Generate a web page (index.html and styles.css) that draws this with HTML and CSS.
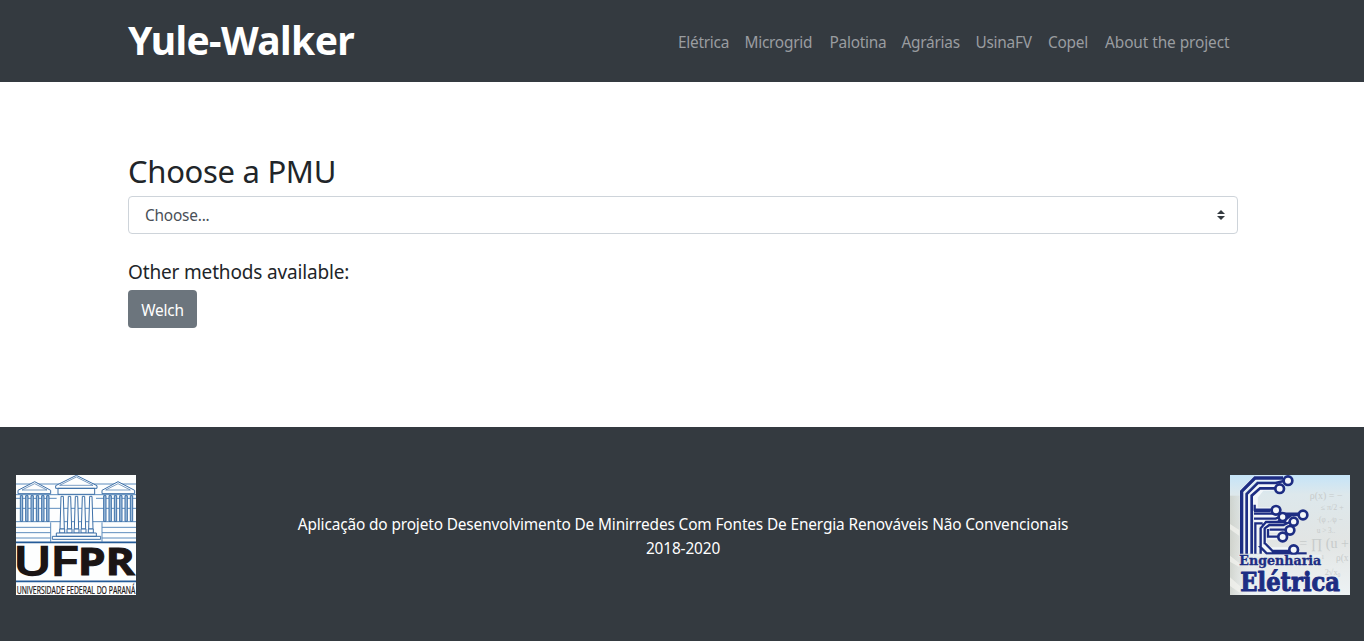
FILE: index.html
```html
<!DOCTYPE html>
<html lang="pt-BR">
<head>
<meta charset="utf-8">
<title>Yule-Walker</title>
<link rel="stylesheet" href="styles.css">
</head>
<body>
<header class="header">
  <h1 class="brand">Yule-Walker</h1>
  <nav class="nav">
    <a>Elétrica</a><a>Microgrid</a><a>Palotina</a><a>Agrárias</a><a>UsinaFV</a><a>Copel</a><a class="about">About the project</a>
  </nav>
</header>
<main class="main">
  <h2 class="title">Choose a PMU</h2>
  <div class="select"><span>Choose...</span>
    <svg class="caret" viewBox="0 0 4 5"><path fill="#343a40" d="M2 0L0 2h4zm0 5L0 3h4z"/></svg>
  </div>
  <h5 class="subtitle">Other methods available:</h5>
  <button class="btn">Welch</button>
</main>
<footer class="footer">
  <svg class="logo" viewBox="18 18 360 360">
    <rect x="18" y="18" width="360" height="360" fill="#fdfefe"/>
    <g fill="none" stroke="#5d8cbd" stroke-width="3">
      <path d="M18 45h135M247 45h131M18 77h360M18 88h122M258 88h120M18 118h360M18 158h104M276 158h102M122 158h154M18 175h104M276 175h102M18 191h104M276 191h102M18 207h104M276 207h102"/>
      <path d="M122 160v58M276 160v58"/>
    </g>
    <g fill="#fdfefe" stroke="#3e70a8" stroke-width="3">
      <path d="M24 64L74 38l48 26v10H24zM276 64l48-26 50 26v10h-98zM137 50l62-31 62 31v8H137zM144 58h110v18H144z"/>
      <path d="M36 63l38-19 37 19zM287 63l37-19 37 19zM149 49l50-25 50 25z" stroke-width="2"/>
      <path fill="#9dbcdb" d="M31 80h7v77h-7zM47 80h7v77h-7zM63 80h7v77h-7zM79 80h7v77h-7zM95 80h7v77h-7zM110 80h7v77h-7zM281 80h7v77h-7zM297 80h7v77h-7zM313 80h7v77h-7zM329 80h7v77h-7zM345 80h7v77h-7zM361 80h7v77h-7z"/>
      <path d="M153 82h7l3 98h-13zM175 82h7l3 98h-13zM196 82h7l3 98h-13zM217 82h7l3 98h-13zM239 82h7l3 98h-13z"/>
      <path d="M149 180h15v12h-15zM171 180h15v12h-15zM192 180h15v12h-15zM213 180h15v12h-15zM235 180h15v12h-15z"/>
      <path d="M139 192h120v10H139zM127 202h145v9H127z"/>
    </g>
    <path d="M18 220h360M18 337h360" stroke="#245b98" stroke-width="5"/>
    <g class="ufpr" fill="#1b1515">
      <text x="12" y="319" textLength="190" lengthAdjust="spacingAndGlyphs" font-size="114" stroke="#1b1515" stroke-width="7">UF</text>
      <text x="203" y="319" textLength="172" lengthAdjust="spacingAndGlyphs" font-size="114" font-weight="700" stroke="#1b1515" stroke-width="3">PR</text>
      <text x="20" y="374" textLength="356" lengthAdjust="spacingAndGlyphs" font-size="30" stroke="#1b1515" stroke-width=".7">UNIVERSIDADE FEDERAL DO PARANÁ</text>
    </g>
  </svg>
  <p class="credits">Aplicação do projeto Desenvolvimento De Minirredes Com Fontes De Energia Renováveis Não Convencionais<br><span>2018-2020</span></p>
  <svg class="logo" viewBox="18 18 360 360">
    <defs>
      <linearGradient id="sky" x1="0" y1="0" x2="0" y2="1"><stop offset="0" stop-color="#c5e4f8"/><stop offset=".16" stop-color="#dde8ec"/><stop offset=".55" stop-color="#e2e5e4"/><stop offset="1" stop-color="#edf2f4"/></linearGradient>
      <linearGradient id="edge"><stop offset="0" stop-color="#c5c8bf" stop-opacity=".65"/><stop offset="1" stop-color="#e7e8e3" stop-opacity="0"/></linearGradient>
    </defs>
    <rect x="18" y="18" width="360" height="360" fill="url(#sky)"/>
    <rect x="18" y="80" width="70" height="298" fill="url(#edge)"/>
    <path d="M18 165l28 18v18l-28-20zM18 260l28 22v12l-28-16zM18 325l30 26v20l-30-20z" fill="#f4f4ef" opacity=".7"/>
    <g class="math" fill="#c7cbcb">
      <text x="257" y="91" font-size="30">ρ(x) = −</text>
      <text x="290" y="124" font-size="24">≤ π/2 +</text>
      <text x="278" y="158" font-size="22">·(φ , ∕φ −</text>
      <text x="278" y="193" font-size="22">u &gt; 3..</text>
      <text x="226" y="238" font-size="42">= ∏ (u +</text>
      <text x="292" y="270" font-size="18">1</text>
      <text x="336" y="276" font-size="28">ρ(x</text>
      <text x="302" y="318" font-size="25">2√x₀</text>
    </g>
    <g fill="none" stroke="#f3f7fa" stroke-width="15" stroke-linejoin="round">
      <path d="M55 252V66L94 28h80M76 252V76l28-29h70M94 122V83l20-25h34M90 123h52M90 135h80M90 149h60l13-3M97 252V163h96M121 252V175l12-12h40l50-24M113 183h73M132 204h28M121 242h72"/>
    </g>
    <g fill="none" stroke="#1d2d83">
      <path stroke-width="10" d="M53 254V67L93 27h84"/>
      <path stroke-width="8" d="M68 254V75L101 42h54l24-6M83 254V80l25-22h46"/>
      <path stroke-width="7" d="M92 107v15h51M90 134h73M90 149h65l12-5M166 134h57M94 254v-91h22M110 254v-76l16-19h61M122 226v-48l14-10h42l20-9M137 182h48M132 180v23h32M122 222l24 24h49M105 230l23 23h120"/>
    </g>
    <path d="M90 121h50v9H90zM184 133h40v9h-20l-25 18h-24l12-10 17-2z" fill="#1d2d83"/>
    <g fill="#f4f7fa" stroke="#1d2d83" stroke-width="8">
      <circle cx="192" cy="35" r="13"/><circle cx="167" cy="59" r="13"/><circle cx="156" cy="124" r="13"/><circle cx="176" cy="144" r="12"/><circle cx="237" cy="138" r="13"/><circle cx="209" cy="158" r="12"/><circle cx="198" cy="184" r="13"/><circle cx="176" cy="204" r="13"/><circle cx="209" cy="242" r="13"/>
    </g>
    <path d="M44 257h248v6H44z" fill="#e9eff3"/>
    <g class="slab" fill="#1d2d83" stroke="#1d2d83" stroke-linejoin="round">
      <text x="46" y="287" textLength="246" lengthAdjust="spacingAndGlyphs" font-size="39" stroke-width="1">Engenharia</text>
      <text x="49" y="366" textLength="299" lengthAdjust="spacingAndGlyphs" font-size="79" stroke-width="3">Elétrica</text>
    </g>
  </svg>
</footer>
</body>
</html>
```
FILE: styles.css
```css
* { box-sizing: border-box; }
body { margin: 0; background: #fff; color: #212529; font-family: "Noto Sans", "Open Sans", sans-serif; font-size: 15.4px; line-height: 24px; letter-spacing: -.2px; }
h1, h2, h5, p { margin: 0; font-weight: 400; white-space: nowrap; }
.header { height: 82px; padding: 0 126px 0 128px; background: #343a40; display: flex; justify-content: space-between; }
.brand { padding-top: 16px; color: #fff; font-size: 39px; line-height: 48px; font-weight: 700; letter-spacing: -.6px; }
.nav { display: grid; grid-template-columns: 66.5px 85px 72px 74px 72.5px 57px 125px; padding-top: 31px; margin-right: 8px; color: #9a9da0; white-space: nowrap; letter-spacing: -.25px; }
.about { letter-spacing: -.08px; }
.main { height: 345px; padding: 70px 126px 0 128px; }
.title { font-size: 31px; line-height: 38px; margin-bottom: 6px; letter-spacing: -.3px; }
.select { height: 38px; padding: 2px 12px 0 16px; border: 1px solid #ced4da; border-radius: 4px; color: #495057; display: flex; align-items: center; justify-content: space-between; }
.caret { width: 8px; height: 10px; margin-top: -3px; }
.subtitle { margin-top: 26px; font-size: 19px; line-height: 24px; letter-spacing: -.16px; }
.btn { display: block; margin-top: 6px; width: 69px; height: 38px; padding: 3px 0 0; border: 0; border-radius: 4px; background: #6c757d; color: #fff; font: inherit; letter-spacing: inherit; }
.footer { height: 214px; padding: 48px 14px 0 16px; background: #343a40; color: #fff; display: flex; justify-content: space-between; }
.logo { width: 120px; height: 120px; flex: none; }
.credits { padding-top: 38px; text-align: center; letter-spacing: -.13px; }
.ufpr { font-family: "Open Sans", sans-serif; letter-spacing: 0; }
.math { font-family: "Liberation Serif", serif; letter-spacing: 0; }
.slab { font-family: "DejaVu Serif", serif; font-weight: 700; letter-spacing: 0; }
```
